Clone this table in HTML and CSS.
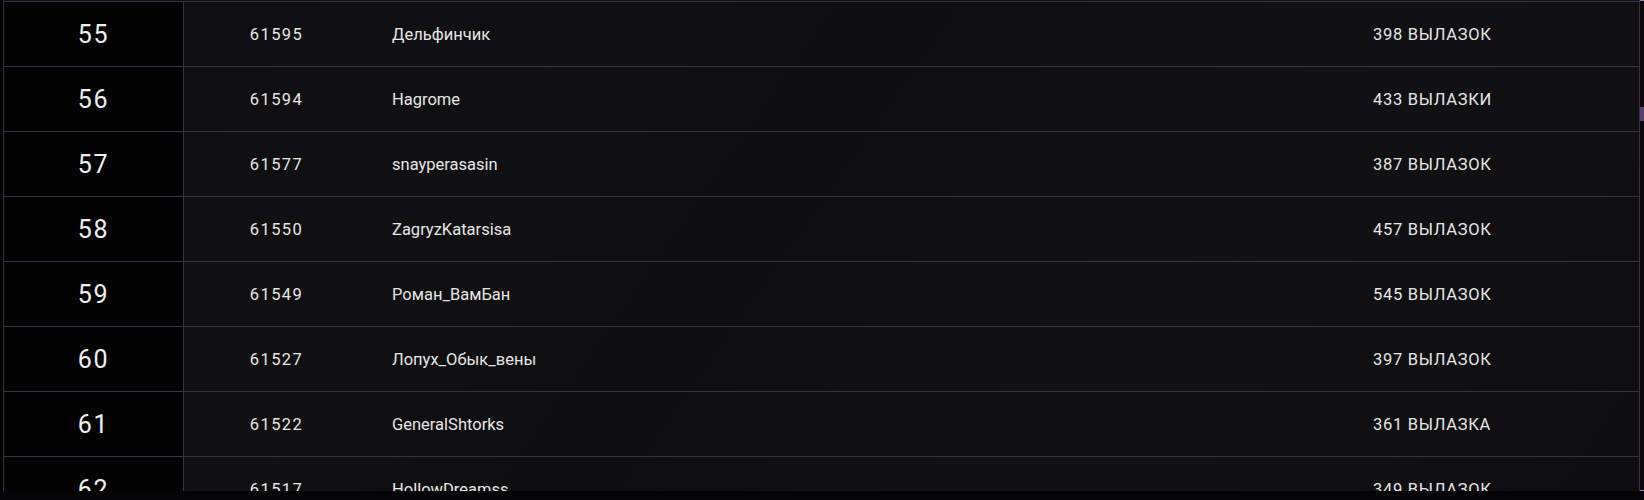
FILE: index.html
```html
<!DOCTYPE html>
<html lang="ru">
<head>
<meta charset="utf-8">
<link rel="stylesheet" href="styles.css">
</head>
<body>
<div class="frame">
  <div class="viewport">
    <div class="table">
      <div class="row"><div class="rank">55</div><div class="id">61595</div><div class="name">Дельфинчик</div><div class="qty">398 ВЫЛАЗОК</div></div>
      <div class="row"><div class="rank">56</div><div class="id">61594</div><div class="name">Hagrome</div><div class="qty">433 ВЫЛАЗКИ</div></div>
      <div class="row"><div class="rank">57</div><div class="id">61577</div><div class="name">snayperasasin</div><div class="qty">387 ВЫЛАЗОК</div></div>
      <div class="row"><div class="rank">58</div><div class="id">61550</div><div class="name">ZagryzKatarsisa</div><div class="qty">457 ВЫЛАЗОК</div></div>
      <div class="row"><div class="rank">59</div><div class="id">61549</div><div class="name">Роман_ВамБан</div><div class="qty">545 ВЫЛАЗОК</div></div>
      <div class="row"><div class="rank">60</div><div class="id">61527</div><div class="name">Лопух_Обык_вены</div><div class="qty">397 ВЫЛАЗОК</div></div>
      <div class="row"><div class="rank">61</div><div class="id">61522</div><div class="name">GeneralShtorks</div><div class="qty">361 ВЫЛАЗКА</div></div>
      <div class="row"><div class="rank">62</div><div class="id">61517</div><div class="name">HollowDreamss</div><div class="qty">349 ВЫЛАЗОК</div></div>
      <div class="row"><div class="rank">63</div><div class="id">61501</div><div class="name">Player63</div><div class="qty">300 ВЫЛАЗОК</div></div>
    </div>
  </div>
  <div class="scrollbar"><div class="thumb"></div></div>
</div>
<div class="footer"></div>
</body>
</html>
```

FILE: styles.css
```css
html, body {
  margin: 0;
  padding: 0;
  background: #000;
  width: 1644px;
  height: 500px;
  overflow: hidden;
}
.frame {
  display: flex;
  height: 491px;
  padding-left: 3px;
}
.viewport {
  flex: 1;
  overflow: hidden;
  border-left: 1px solid #3a3042;
  border-right: 1px solid #3a3042;
  padding-top: 1px;
  background:
    linear-gradient(125deg, rgba(255,255,255,0) 0%, rgba(255,255,255,0.012) 30%, rgba(255,255,255,0) 45%, rgba(255,255,255,0.015) 70%, rgba(255,255,255,0) 100%),
    #0e0d0f;
}
.table {
  border-top: 1px solid #3a3042;
}
.row {
  display: grid;
  grid-template-columns: 180px 185px 1fr 266px;
  height: 64px;
  border-bottom: 1px solid #3a3042;
  align-items: center;
  color: #e6e6e6;
  font-family: Roboto, "Liberation Sans", sans-serif;
  font-size: 16.5px;
}
.rank {
  height: 100%;
  display: flex;
  align-items: center;
  justify-content: center;
  background: #030303;
  border-right: 1px solid #3a3042;
  font-size: 25px;
  font-weight: 400;
  letter-spacing: 1.8px;
  color: #efefef;
}
.id {
  text-align: center;
  letter-spacing: 1.4px;
}
.name {
  padding-left: 23px;
}
.qty {
  padding-left: 0;
  letter-spacing: 0.7px;
}
.scrollbar {
  width: 4px;
  background: #0b080e;
  display: flex;
  flex-direction: column;
  border-top: 1px solid #a070d0;
  border-bottom: 1px solid #a070d0;
  box-sizing: border-box;
}
.thumb {
  margin-top: 106px;
  height: 14px;
  background: #5b3e72;
}
.footer {
  height: 9px;
  background: #050407;
}
```
